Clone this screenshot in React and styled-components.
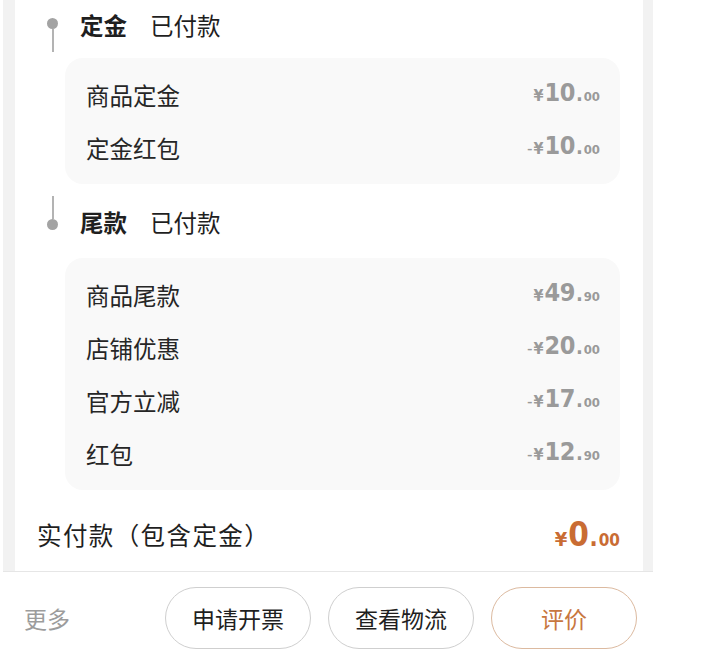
import styled, { createGlobalStyle } from "styled-components";

const GlobalStyle = createGlobalStyle`
    body {
        margin: 0;
        background: #ffffff;
        font-family: "Noto Sans CJK SC", "Noto Sans", sans-serif;
    }
`;

const deposit = [
    { label: "商品定金", sign: "", int: "10", dec: "00" },
    { label: "定金红包", sign: "-", int: "10", dec: "00" },
];

const balance = [
    { label: "商品尾款", sign: "", int: "49", dec: "90" },
    { label: "店铺优惠", sign: "-", int: "20", dec: "00" },
    { label: "官方立减", sign: "-", int: "17", dec: "00" },
    { label: "红包", sign: "-", int: "12", dec: "90" },
];

function Amount({ sign, int, dec, total }) {
    return (
        <Price total={total}>
            {sign}<Yen total={total}>¥</Yen><Int total={total}>{int}</Int><Dot total={total}>.</Dot><Dec total={total}>{dec}</Dec>
        </Price>
    );
}

function Stage({ name, status, rows, first }) {
    return (
        <>
            <Header first={first}>
                <Marker first={first}>
                    <Point />
                    <Line />
                </Marker>
                <Title first={first}>
                    <strong>{name}</strong>
                    <span>{status}</span>
                </Title>
            </Header>
            <Box>
                {rows.map((row) => (
                    <Row key={row.label}>
                        <Label>{row.label}</Label>
                        <Amount sign={row.sign} int={row.int} dec={row.dec} />
                    </Row>
                ))}
            </Box>
        </>
    );
}

export default function App() {
    return (
        <>
            <GlobalStyle />
            <Page>
                <Frame>
                    <Card>
                        <Stage first name="定金" status="已付款" rows={deposit} />
                        <Stage name="尾款" status="已付款" rows={balance} />
                        <Total>
                            <TotalLabel>实付款（包含定金）</TotalLabel>
                            <Amount total sign="" int="0" dec="00" />
                        </Total>
                    </Card>
                </Frame>

                <Actions>
                    <More>更多</More>
                    <Buttons>
                        <Button>申请开票</Button>
                        <Button>查看物流</Button>
                        <Button accent>评价</Button>
                    </Buttons>
                </Actions>
            </Page>
        </>
    );
}

const Page = styled.div`
    width: 706px;
    height: 664px;
    overflow: hidden;
    background: #ffffff;
`;

const Frame = styled.div`
    width: 650px;
    margin-left: 3px;
    padding: 0 10px 0 12px;
    box-sizing: border-box;
    background: #f2f2f2;
    border-bottom: 1px solid #e6e6e6;
`;

const Card = styled.div`
    height: 571px;
    padding-right: 23px;
    box-sizing: border-box;
    background: #ffffff;
`;

const Header = styled.div`
    height: ${(p) => (p.first ? 58 : 74)}px;
    padding-left: 32px;
    box-sizing: border-box;

    display: flex;
    flex-direction: row;
    align-items: flex-start;
`;

const Marker = styled.div`
    width: 11px;
    margin-top: ${(p) => (p.first ? 18 : 12)}px;
    margin-right: 22px;

    display: flex;
    flex-direction: ${(p) => (p.first ? "column" : "column-reverse")};
    align-items: center;
`;

const Point = styled.div`
    width: 11px;
    height: 11px;
    border-radius: 50%;
    background: #a3a3a3;
`;

const Line = styled.div`
    width: 2px;
    height: 23px;
    background: #b3b3b3;
`;

const Title = styled.div`
    margin-top: ${(p) => (p.first ? 10 : 23)}px;

    display: flex;
    gap: 23px;

    color: #1f1f1f;
    font-size: 23.5px;
    line-height: 30px;

    strong {
        font-weight: 700;
    }

    span {
        font-weight: 400;
    }
`;

const Box = styled.div`
    margin-left: 50px;
    padding: 10px 20px 10px 21px;
    border-radius: 18px;
    background: #f9f9f9;
`;

const Row = styled.div`
    height: 53px;

    display: flex;
    flex-direction: row;
    align-items: center;
    justify-content: space-between;
`;

const Label = styled.div`
    color: #262626;
    font-size: 23.5px;
    line-height: 30px;
`;

const Price = styled.div`
    font-family: "DejaVu Sans Condensed", "DejaVu Sans", sans-serif;
    color: ${(p) => (p.total ? "#c96c33" : "#9a9a9a")};
    font-size: ${(p) => (p.total ? 20 : 17)}px;
    line-height: 30px;
    white-space: nowrap;
`;

const Yen = styled.span`
    font-size: ${(p) => (p.total ? 20 : 16)}px;
    font-weight: 700;
    margin: 0 1px;
`;

const Int = styled.span`
    font-size: ${(p) => (p.total ? 33 : 25)}px;
    font-weight: 700;
    letter-spacing: -0.5px;
`;

const Dot = styled.span`
    font-size: ${(p) => (p.total ? 24 : 20)}px;
    font-weight: 700;
    margin: 0 1px;
`;

const Dec = styled.span`
    font-size: ${(p) => (p.total ? 17 : 13)}px;
    font-weight: 700;
`;

const Total = styled.div`
    height: 81px;
    padding: 30px 0 0 22px;
    box-sizing: border-box;

    display: flex;
    flex-direction: row;
    align-items: flex-start;
    justify-content: space-between;
`;

const TotalLabel = styled.div`
    color: #1f1f1f;
    font-size: 24.5px;
    line-height: 30px;
    letter-spacing: 1.4px;
`;

const Actions = styled.div`
    width: 653px;
    padding: 15px 16px 0 24px;
    box-sizing: border-box;

    display: flex;
    flex-direction: row;
    align-items: center;
`;

const More = styled.div`
    color: #9c9c9c;
    font-size: 23px;
`;

const Buttons = styled.div`
    margin-left: auto;

    display: flex;
    gap: 17px;
`;

const Button = styled.button`
    width: 146px;
    height: 62px;
    padding: 0;

    border: 1px solid ${(p) => (p.accent ? "#dcbaa0" : "#cfcfcf")};
    border-radius: 31px;
    background: #ffffff;

    color: ${(p) => (p.accent ? "#c8773f" : "#1f1f1f")};
    font-family: "Noto Sans CJK SC", "Noto Sans", sans-serif;
    font-size: 23px;
`;
